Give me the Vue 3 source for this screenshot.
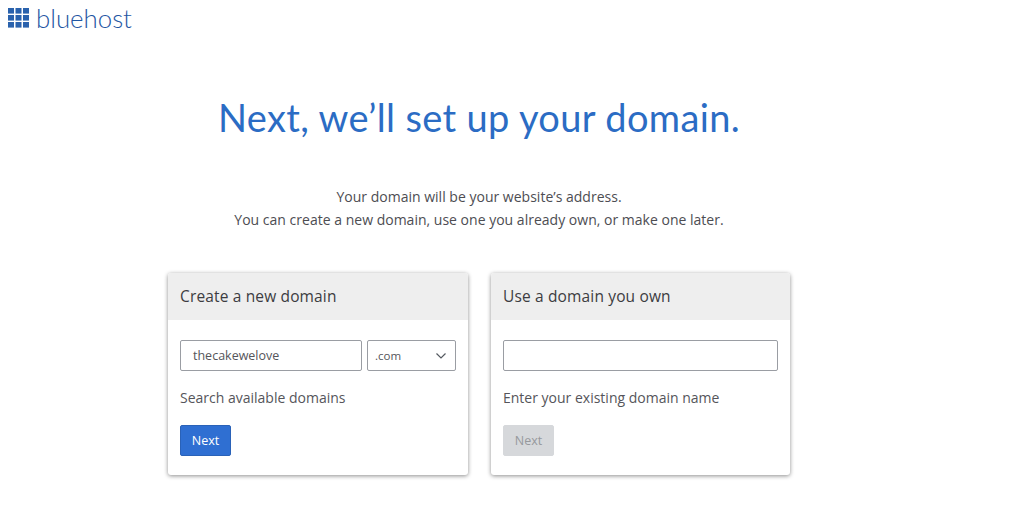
<script setup>
const cells = Array.from({ length: 9 }, (_, i) => i)
</script>

<template>
  <div class="page">
    <header class="brand">
      <svg class="mark" width="22" height="20" viewBox="0 0 22 20">
        <rect v-for="c in cells" :key="c" :x="(c % 3) * 7.5" :y="Math.floor(c / 3) * 7" width="6" height="5.6" fill="#2a62ad" />
      </svg>
      <span class="word">bluehost</span>
    </header>
    <main class="main">
      <h1 class="title">Next, we’ll set up your domain.</h1>
      <p class="intro">Your domain will be your website’s address.<br />You can create a new domain, use one you already own, or make one later.</p>
      <div class="cards">
        <section class="card">
          <h2 class="card-head">Create a new domain</h2>
          <div class="card-body">
            <div class="fields">
              <div class="input grow typed">thecakewelove</div>
              <div class="input select">
                <span>.com</span>
                <svg width="12" height="8" viewBox="0 0 12 8"><path d="M1.5 1.5 6 6l4.5-4.5" fill="none" stroke="#555a60" stroke-width="1.2" /></svg>
              </div>
            </div>
            <p class="hint">Search available domains</p>
            <button class="btn primary">Next</button>
          </div>
        </section>
        <section class="card narrow">
          <h2 class="card-head">Use a domain you own</h2>
          <div class="card-body">
            <div class="fields">
              <div class="input grow"></div>
            </div>
            <p class="hint">Enter your existing domain name</p>
            <button class="btn disabled">Next</button>
          </div>
        </section>
      </div>
    </main>
  </div>
</template>

<style>
html, body { margin: 0; background: #fff; }
</style>

<style scoped>
.page { width: 1024px; height: 512px; overflow: hidden; font-family: "Open Sans", sans-serif; color: #4a4a4f; }
.brand { display: flex; align-items: center; gap: 6px; height: 38px; padding-left: 8px; }
.mark { flex: none; margin-top: -3px; }
.word { font-family: Lato, sans-serif; font-weight: 300; font-size: 25.8px; line-height: 38px; color: #1f56a3; margin-top: -3px; }
.main { width: 958px; display: flex; flex-direction: column; align-items: center; }
.title { margin: 56px 0 0; font-family: Lato, sans-serif; font-weight: 400; font-size: 38px; letter-spacing: .36px; line-height: 46px; color: #2b6cc4; }
.intro { margin: 45px 0 0; font-size: 14px; letter-spacing: .01px; line-height: 23px; text-align: center; color: #4d4d52; }
.cards { display: flex; gap: 23px; margin-top: 42px; }
.card { width: 300px; height: 202px; background: #fff; border-radius: 3px; box-shadow: 0 1px 4px rgba(0, 0, 0, .45); overflow: hidden; }
.narrow { width: 299px; }
.card-head { margin: 0; height: 47px; padding: 0 12px; background: #eeeeee; font-size: 15.5px; font-weight: 500; letter-spacing: .15px; line-height: 47px; color: #3c3c41; }
.card-body { padding: 20px 12px 0; }
.fields { display: flex; gap: 5px; }
.input { box-sizing: border-box; height: 31px; border: 1px solid #9a9da3; border-radius: 2px; font-size: 12.5px; line-height: 29px; color: #55555a; }
.grow { flex: 1; }
.typed { padding-left: 12px; }
.select { width: 89px; display: flex; align-items: center; justify-content: space-between; padding: 0 8px 0 7px; font-size: 11.5px; }
.hint { margin: 0; padding-top: 17px; font-size: 14px; line-height: 20px; color: #55555a; }
.btn { display: block; width: 51px; height: 31px; margin-top: 17px; padding: 0; border-radius: 2px; font: 12.5px "Open Sans", sans-serif; }
.primary { background: #2f6fd2; border: 1px solid #2a62b8; color: #fff; }
.disabled { background: #d6d8db; border: 1px solid #d6d8db; color: #96999d; }
</style>
